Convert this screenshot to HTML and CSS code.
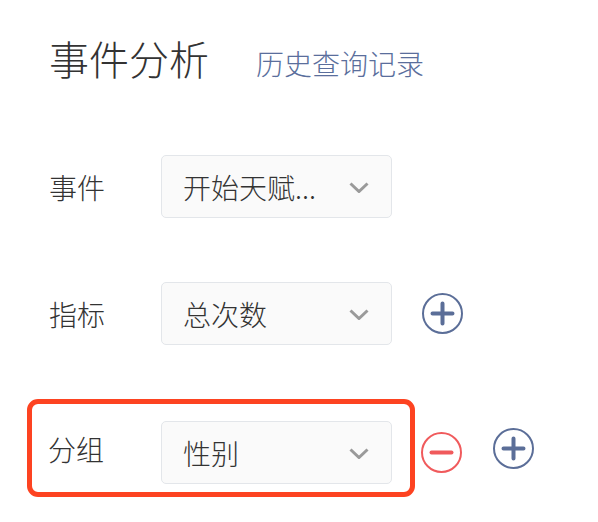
FILE: index.html
```html
<!DOCTYPE html>
<html lang="zh-CN">
<head>
<meta charset="utf-8">
<link rel="stylesheet" href="styles.css">
</head>
<body>
<div class="page">
  <div class="title-row">
    <span class="title">事件分析</span>
    <span class="link">历史查询记录</span>
  </div>

  <div class="row row-event">
    <span class="label">事件</span>
    <div class="select">
      <span class="select-text">开始天赋...</span>
      <svg class="chev" width="20" height="11" viewBox="0 0 20 11"><polyline points="1.5,1.5 10,9.5 18.5,1.5" fill="none" stroke="#9a9a9a" stroke-width="3"/></svg>
    </div>
  </div>

  <div class="row row-metric">
    <span class="label">指标</span>
    <div class="select">
      <span class="select-text">总次数</span>
      <svg class="chev" width="20" height="11" viewBox="0 0 20 11"><polyline points="1.5,1.5 10,9.5 18.5,1.5" fill="none" stroke="#9a9a9a" stroke-width="3"/></svg>
    </div>
    <svg class="icon icon-plus-first" width="41" height="41" viewBox="0 0 41 41"><circle cx="20.5" cy="20.5" r="19.5" fill="none" stroke="#5b6e98" stroke-width="2"/><path d="M10.5 20.5H30.5M20.5 10.5V30.5" stroke="#5b6e98" stroke-width="4" stroke-linecap="round"/></svg>
  </div>

  <div class="group-row">
    <div class="group-box">
      <span class="label label-group">分组</span>
      <div class="select">
        <span class="select-text">性别</span>
        <svg class="chev" width="20" height="11" viewBox="0 0 20 11"><polyline points="1.5,1.5 10,9.5 18.5,1.5" fill="none" stroke="#9a9a9a" stroke-width="3"/></svg>
      </div>
    </div>
    <svg class="icon icon-minus" width="41" height="41" viewBox="0 0 41 41"><circle cx="20.5" cy="20.5" r="19.5" fill="none" stroke="#f05a5c" stroke-width="2"/><path d="M10.5 20.5H30.5" stroke="#f05a5c" stroke-width="4" stroke-linecap="round"/></svg>
    <svg class="icon icon-plus" width="41" height="41" viewBox="0 0 41 41"><circle cx="20.5" cy="20.5" r="19.5" fill="none" stroke="#5b6e98" stroke-width="2"/><path d="M10.5 20.5H30.5M20.5 10.5V30.5" stroke="#5b6e98" stroke-width="4" stroke-linecap="round"/></svg>
  </div>
</div>
</body>
</html>
```

FILE: styles.css
```css
html, body {
  margin: 0;
  padding: 0;
  background: #ffffff;
}

body {
  font-family: "Noto Sans CJK SC", "Noto Sans", sans-serif;
  font-weight: 300;
  color: #333333;
}

.page {
  padding: 30px 0 0 27px;
}

.title-row {
  display: flex;
  align-items: baseline;
  padding-left: 22px;
  height: 56px;
}

.title {
  font-size: 40px;
  line-height: 56px;
  color: #333333;
}

.link {
  font-size: 28px;
  margin-left: 47px;
  color: #5a6e9c;
}

.row {
  display: flex;
  align-items: center;
  padding-left: 22px;
}

.row-event {
  margin-top: 69px;
}

.row-metric {
  margin-top: 64px;
}

.label {
  font-size: 28px;
  width: 112px;
  flex: none;
}

.select {
  box-sizing: border-box;
  width: 231px;
  height: 63px;
  border: 1px solid #e3e6ea;
  border-radius: 5px;
  background: #fafafa;
  display: flex;
  align-items: center;
  justify-content: space-between;
  padding: 0 22px 0 21px;
  flex: none;
}

.select-text {
  font-size: 28px;
  color: #333333;
}

.chev {
  display: block;
  margin-top: 2px;
}

.icon {
  display: block;
  flex: none;
}

.icon-plus-first {
  margin-left: 30px;
}

.group-row {
  display: flex;
  align-items: center;
  margin-top: 54px;
}

.group-box {
  box-sizing: border-box;
  width: 388px;
  height: 98px;
  border: 5px solid #fd4321;
  border-radius: 11px;
  display: flex;
  align-items: center;
  padding: 9px 0 0 16px;
}

.label-group {
  width: 113px;
  margin-bottom: 8px;
}

.icon-minus {
  margin-left: 6px;
  margin-top: 8px;
}

.icon-plus {
  margin-left: 31px;
}
```
